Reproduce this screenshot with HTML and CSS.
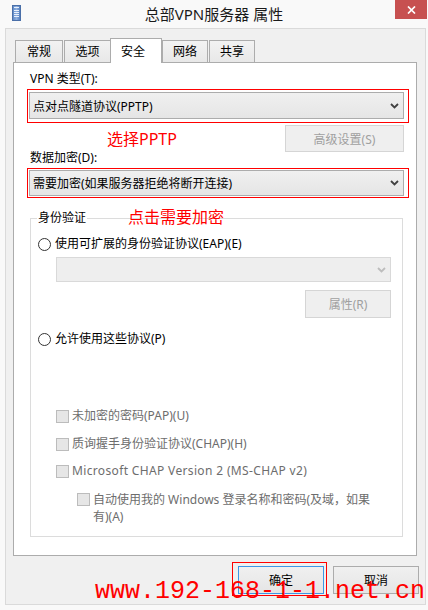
FILE: index.html
```html
<!DOCTYPE html>
<html lang="zh-CN">
<head>
<meta charset="utf-8">
<title>总部VPN服务器 属性</title>
<link rel="stylesheet" href="styles.css">
</head>
<body>
<div class="titlebar">
  <div class="tb-left">
    <svg class="app-icon" width="9" height="16" viewBox="0 0 9 16">
      <defs>
        <linearGradient id="g" x1="0" y1="0" x2="1" y2="0">
          <stop offset="0" stop-color="#5a86c4"/>
          <stop offset="0.5" stop-color="#8fb0e0"/>
          <stop offset="1" stop-color="#4c78b8"/>
        </linearGradient>
      </defs>
      <rect x="0.5" y="0.5" width="8" height="15" fill="url(#g)" stroke="#4a6fa8"/>
      <rect x="2" y="2" width="5" height="1" fill="#e8f0fb"/>
      <rect x="2" y="5" width="5" height="1" fill="#e8f0fb"/>
      <rect x="2" y="7" width="5" height="1" fill="#e8f0fb"/>
      <rect x="2" y="9" width="5" height="1" fill="#e8f0fb"/>
      <rect x="2" y="11" width="5" height="1" fill="#e8f0fb"/>
    </svg>
  </div>
  <div class="title">总部VPN服务器 属性</div>
  <div class="tb-right">
    <div class="close">
      <svg width="9" height="8" viewBox="0 0 9 8"><path d="M1 0.5 L8 7.5 M8 0.5 L1 7.5" stroke="#fff" stroke-width="1.7"/></svg>
    </div>
  </div>
</div>

<div class="client">
  <div class="tabs">
    <div class="tab t1">常规</div>
    <div class="tab t2">选项</div>
    <div class="tab active">安全</div>
    <div class="tab t4">网络</div>
    <div class="tab t5">共享</div>
  </div>
  <div class="panel">
    <div class="label">VPN 类型(T):</div>
    <div class="hl hl1">
      <div class="combo"><span>点对点隧道协议(PPTP)</span>
        <svg class="chev" width="9" height="6" viewBox="0 0 9 6"><path d="M1 1 L4.5 4.5 L8 1" fill="none" stroke="#404040" stroke-width="1.8"/></svg>
      </div>
    </div>
    <div class="row-adv">
      <span class="note note1">选择PPTP</span>
      <div class="btn disabled adv">高级设置(S)</div>
    </div>
    <div class="label label2">数据加密(D):</div>
    <div class="hl hl2">
      <div class="combo combo2"><span>需要加密(如果服务器拒绝将断开连接)</span>
        <svg class="chev" width="9" height="6" viewBox="0 0 9 6"><path d="M1 1 L4.5 4.5 L8 1" fill="none" stroke="#404040" stroke-width="1.8"/></svg>
      </div>
    </div>
    <fieldset class="group">
      <legend>身份验证</legend>
      <span class="note note2">点击需要加密</span>
      <div class="radio-row r1"><span class="radio"></span><span>使用可扩展的身份验证协议(EAP)(E)</span></div>
      <div class="combo combo-dis">
        <svg class="chev" width="9" height="6" viewBox="0 0 9 6"><path d="M1 1 L4.5 4.5 L8 1" fill="none" stroke="#bdbdbd" stroke-width="1.8"/></svg>
      </div>
      <div class="btn disabled props">属性(R)</div>
      <div class="radio-row r2"><span class="radio"></span><span>允许使用这些协议(P)</span></div>
      <div class="check-row c1"><span class="check"></span><span>未加密的密码(PAP)(U)</span></div>
      <div class="check-row c2"><span class="check"></span><span>质询握手身份验证协议(CHAP)(H)</span></div>
      <div class="check-row c3"><span class="check"></span><span class="latin">Microsoft CHAP Version 2 (MS-CHAP v2)</span></div>
      <div class="check-row c4"><span class="check"></span><span class="wrap">自动使用我的 Windows 登录名称和密码(及域，如果有)(A)</span></div>
    </fieldset>
  </div>
  <div class="buttons">
    <div class="btn ok">确定<span class="okmark"></span></div>
    <div class="btn">取消</div>
  </div>
</div>
<div class="watermark">www.192-168-1-1.net.cn</div>
</body>
</html>
```
FILE: styles.css
```css
* { box-sizing: border-box; }
html, body { margin: 0; padding: 0; }
body {
  width: 428px;
  height: 610px;
  background: #f9f9f9;
  position: relative;
  overflow: hidden;
  font-family: "Noto Sans", "Noto Sans CJK SC", sans-serif;
  font-size: 12px;
  color: #000;
}
.titlebar {
  height: 28px;
  display: grid;
  grid-template-columns: 1fr auto 1fr;
  align-items: start;
}
.tb-left { padding: 5px 0 0 12px; }
.app-icon { display: block; }
.title {
  font-size: 15px;
  line-height: 28px;
  color: #1a1a1a;
}
.tb-right { display: flex; justify-content: flex-end; }
.close {
  width: 32px;
  height: 19px;
  margin-right: 1px;
  background: #c75050;
  display: flex;
  align-items: center;
  justify-content: center;
}
.close svg { display: block; }

.client {
  margin: 0 2px 0 5px;
  height: 577px;
  border: 1px solid #dadada;
  background: #f0f0f0;
  padding: 9px 8px 0 7px;
}
.tabs {
  display: flex;
  align-items: flex-end;
  height: 24px;
  padding-left: 2px;
  position: relative;
  z-index: 1;
}
.tab {
  height: 22px;
  line-height: 21px;
  border: 1px solid #acacac;
  border-bottom: none;
  background: linear-gradient(#f2f2f2, #e8e8e8);
  text-align: center;
}
.t1 { width: 48px; }
.t2 { width: 47px; margin-left: 1px; }
.active {
  width: 52px;
  line-height: 25px;
  background: #fff;
  margin: 0 -1px -1px -1px;
  height: 25px;
  text-align: left;
  padding-left: 10px;
}
.t4 { width: 46px; margin-left: 1px; }
.t5 { width: 46px; margin-left: 1px; }

.panel {
  height: 494px;
  border: 1px solid #acacac;
  background: #fff;
  padding: 8px 12px 0 15px;
}
.label { line-height: 16px; padding-left: 1px; }
.label2 { line-height: 14px; margin-top: -1px; }
.hl {
  border: 1px solid #ff0000;
  margin: 2px -5px 0 -2px;
  padding: 2px 4px 3px 1px;
}
.hl2 { margin-top: 3px; padding: 1px 4px 1px 1px; }
.combo {
  height: 27px;
  border: 1px solid #acacac;
  background: linear-gradient(#f0f0f0, #e5e5e5);
  display: flex;
  align-items: center;
  justify-content: space-between;
  padding: 0 4px 0 3px;
}
.combo2 { height: 26px; }
.chev { display: block; }
.row-adv {
  margin-top: 2px;
  height: 27px;
  display: flex;
  align-items: center;
}
.note {
  color: #ff0000;
  font-size: 16px;
  line-height: 20px;
}
.note1 { margin-left: 78px; }
.btn {
  height: 28px;
  width: 86px;
  border: 1px solid #acacac;
  background: linear-gradient(#f0f0f0, #e5e5e5);
  display: flex;
  align-items: center;
  justify-content: center;
  position: relative;
}
.btn.disabled {
  border-color: #d5d5d5;
  background: #efefef;
  color: #a0a0a0;
}
.adv { width: 119px; height: 27px; margin-left: auto; }

.group {
  margin: 12px 1px 0 1px;
  padding: 0 6px 11px 6px;
  border: 1px solid #dcdcdc;
  position: relative;
  min-width: 0;
}
.group legend {
  padding: 0 1px;
  line-height: 16px;
}
.note2 {
  position: absolute;
  left: 97px;
  top: -19px;
}
.radio-row, .check-row {
  display: flex;
  align-items: center;
  line-height: 16px;
}
.radio {
  width: 13px;
  height: 13px;
  border: 1px solid #333;
  border-radius: 50%;
  background: #fff;
  margin: 0 4px 0 1px;
  flex: none;
}
.r1 { margin-top: 10px; }
.combo-dis {
  margin: 5px 0 0 19px;
  width: 335px;
  height: 25px;
  border-color: #d9d9d9;
  background: #eeeeee;
  justify-content: flex-end;
}
.props { margin: 8px 0 0 268px; }
.r2 { margin-top: 13px; }
.check-row { color: #6d6d6d; padding-left: 19px; }
.check {
  width: 13px;
  height: 13px;
  border: 1px solid #bcbcbc;
  background: #e6e6e6;
  margin-right: 3px;
  flex: none;
}
.c1 { margin-top: 61px; }
.c2 { margin-top: 12px; }
.c3 { margin-top: 11px; }
.latin { letter-spacing: 0.35px; }
.c4 { margin-top: 12px; padding-left: 40px; align-items: flex-start; line-height: 17px; }
.c4 .check { margin-top: 2px; }
.wrap { width: 292px; }

.buttons {
  margin: 10px -2px 0 0;
  display: flex;
  justify-content: flex-end;
  gap: 9px;
}
.ok { border-color: #3c96e6; }
.okmark {
  position: absolute;
  left: -7px;
  top: -5px;
  right: -4px;
  bottom: -3px;
  border: 1px solid #ff0000;
}
.watermark {
  position: absolute;
  left: 95px;
  top: 577px;
  font-family: "Liberation Mono", monospace;
  font-size: 25px;
  line-height: 30px;
  color: #ff0000;
  white-space: nowrap;
}
```
